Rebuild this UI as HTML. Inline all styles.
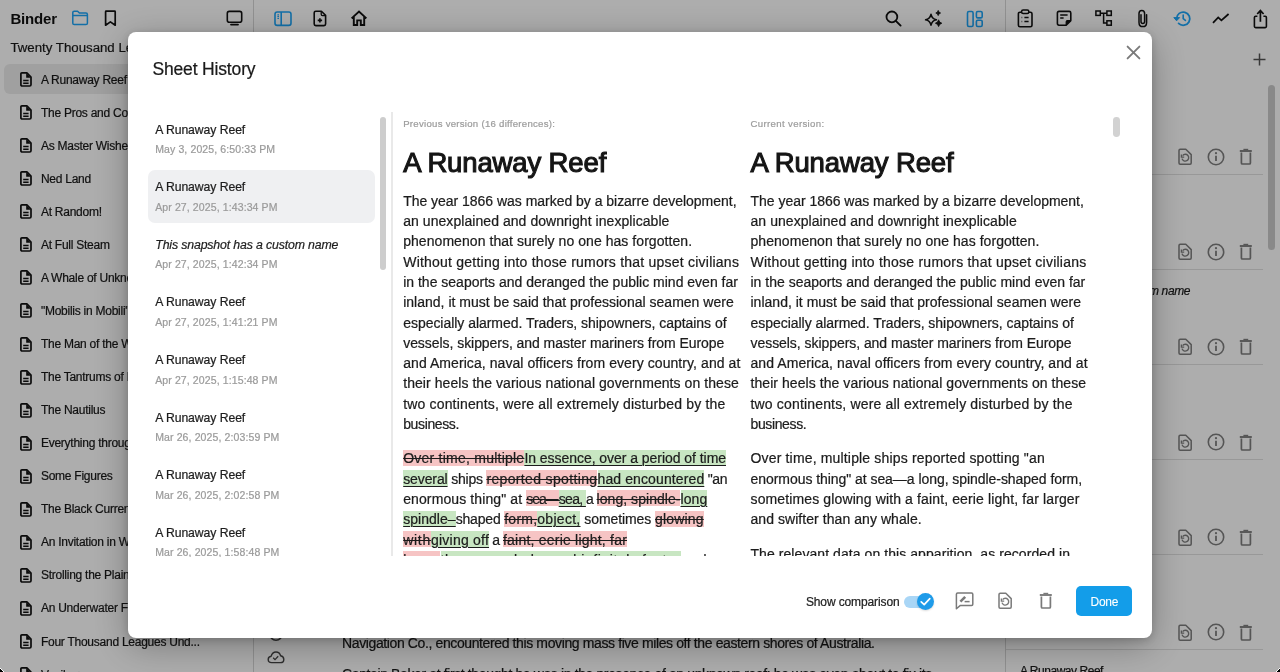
<!DOCTYPE html>
<html><head><meta charset="utf-8">
<style>
*{box-sizing:border-box;margin:0;padding:0}
html,body{width:1280px;height:672px;overflow:hidden}
body{position:relative;background:#fff;will-change:transform;font-family:"Liberation Sans",sans-serif;color:#222}
.a{position:absolute}
.t{white-space:pre;-webkit-text-stroke:0.22px currentColor}
.nb{-webkit-text-stroke:0}
svg.a{overflow:visible}
</style></head><body>

<div class="a" style="left:0.00px;top:0.00px;width:253.00px;height:672.00px;background:#ffffff;"></div>
<div class="a" style="left:253.00px;top:0.00px;width:1.00px;height:672.00px;background:#d6d6d6;"></div>
<div class="a" style="left:1005.00px;top:0.00px;width:1.00px;height:672.00px;background:#d6d6d6;"></div>
<div class="a t " style="left:10.40px;top:11.10px;font-size:15px;line-height:15px;color:#111;letter-spacing:-0.153px;font-weight:bold;-webkit-text-stroke:0;">Binder</div>
<svg class="a" style="left:71px;top:10px;" width="18" height="16" viewBox="0 0 18 16"><path d="M1.8 4.2V2.6Q1.8 1.2 3.2 1.2H6.6L8.4 3H15Q16.4 3 16.4 4.4V13.2Q16.4 14.6 15 14.6H3.2Q1.8 14.6 1.8 13.2Z M1.8 5.6H16.4" fill="none" stroke="#1ca4f7" stroke-width="1.5" stroke-linejoin="round"/></svg>
<svg class="a" style="left:104px;top:10px;" width="13" height="17" viewBox="0 0 13 17"><path d="M1.6 1.8Q1.6 1.2 2.2 1.2H10.6Q11.2 1.2 11.2 1.8V15.2L6.4 11.9L1.6 15.2Z" fill="none" stroke="#111" stroke-width="1.7" stroke-linejoin="round"/></svg>
<svg class="a" style="left:226.3px;top:10.4px;" width="17" height="17" viewBox="0 0 17 17"><rect x="1.3" y="1.4" width="14.4" height="10.8" rx="2" fill="none" stroke="#111" stroke-width="1.6"/><path d="M5 14.6H12" stroke="#111" stroke-width="1.8" stroke-linecap="round"/></svg>
<svg class="a" style="left:274px;top:11px;" width="18" height="15" viewBox="0 0 18 15"><rect x="1" y="1" width="16" height="13.4" rx="2.2" fill="none" stroke="#1ca4f7" stroke-width="1.6"/><path d="M7.2 1V14.4" stroke="#1ca4f7" stroke-width="1.6"/><path d="M3.4 3.9H5M3.4 5.7H5M3.4 7.5H5" stroke="#1ca4f7" stroke-width="1.2"/></svg>
<svg class="a" style="left:313px;top:10px;" width="14" height="17" viewBox="0 0 14 17"><path d="M2.8 1.2H8.4L12.6 5.4V14Q12.6 15.6 11 15.6H2.8Q1.2 15.6 1.2 14V2.8Q1.2 1.2 2.8 1.2Z" fill="none" stroke="#111" stroke-width="1.6" stroke-linejoin="round"/><path d="M8.2 1.4V4.2Q8.2 5.6 9.6 5.6H12.4" fill="none" stroke="#111" stroke-width="1.3"/><path d="M6.9 8.2V12.6M4.7 10.4H9.1" stroke="#111" stroke-width="1.6"/></svg>
<svg class="a" style="left:350px;top:10px;" width="18" height="17" viewBox="0 0 18 17"><path d="M1.6 8.4L9 1.6L16.4 8.4M3.8 6.6V15H7.2V10.4H10.8V15H14.2V6.6" fill="none" stroke="#111" stroke-width="1.9" stroke-linejoin="miter"/></svg>
<svg class="a" style="left:885px;top:10px;" width="17" height="17" viewBox="0 0 17 17"><circle cx="6.9" cy="6.9" r="5.4" fill="none" stroke="#111" stroke-width="1.8"/><path d="M10.8 10.8L15.6 15.6" stroke="#111" stroke-width="1.9" stroke-linecap="round"/></svg>
<svg class="a" style="left:924px;top:9px;" width="20" height="19" viewBox="0 0 20 19"><path d="M7 5.4Q8 10 12.4 10.8Q8 11.6 7 16.2Q6 11.6 1.6 10.8Q6 10 7 5.4Z" fill="none" stroke="#111" stroke-width="1.6" stroke-linejoin="round"/><path d="M14.2 1.4Q14.6 3.6 16.6 4Q14.6 4.4 14.2 6.6Q13.8 4.4 11.8 4Q13.8 3.6 14.2 1.4Z" fill="#111" stroke="#111" stroke-width="0.8"/><path d="M14.6 10.8Q15.2 13.6 17.8 14.2Q15.2 14.8 14.6 17.6Q14 14.8 11.4 14.2Q14 13.6 14.6 10.8Z" fill="#111" stroke="#111" stroke-width="0.8"/></svg>
<svg class="a" style="left:966px;top:10px;" width="18" height="18" viewBox="0 0 18 18"><rect x="1.5" y="1.5" width="5.6" height="15" rx="1.4" fill="none" stroke="#1ca4f7" stroke-width="1.6"/><rect x="10.4" y="1.5" width="5.8" height="6.4" rx="1.4" fill="none" stroke="#1ca4f7" stroke-width="1.6"/><rect x="10.4" y="10.2" width="5.8" height="6.3" rx="1.4" fill="none" stroke="#1ca4f7" stroke-width="1.6"/></svg>
<svg class="a" style="left:1017px;top:9px;" width="17" height="19" viewBox="0 0 17 19"><path d="M4.4 3.2H3Q1.4 3.2 1.4 4.8V16.2Q1.4 17.8 3 17.8H13.4Q15 17.8 15 16.2V4.8Q15 3.2 13.4 3.2H12" fill="none" stroke="#111" stroke-width="1.6"/><rect x="4.6" y="1" width="7.2" height="3.4" rx="1.5" fill="none" stroke="#111" stroke-width="1.5"/><path d="M4.6 8.6H5.2M4.6 12.4H5.2M7.4 8.6H11.6M7.4 12.4H11.6" stroke="#111" stroke-width="1.5"/></svg>
<svg class="a" style="left:1056px;top:10px;" width="17" height="17" viewBox="0 0 17 17"><path d="M3 1.4H13.2Q14.8 1.4 14.8 3V10.6L10.2 15.2H3Q1.4 15.2 1.4 13.6V3Q1.4 1.4 3 1.4Z" fill="none" stroke="#111" stroke-width="1.6" stroke-linejoin="round"/><path d="M14.6 10.6H11.4Q10.2 10.6 10.2 11.8V15" fill="#111" stroke="#111" stroke-width="1.2"/><path d="M4.2 5H11.6M4.2 8H7.6" stroke="#111" stroke-width="1.5"/></svg>
<svg class="a" style="left:1095px;top:10px;" width="18" height="17" viewBox="0 0 18 17"><rect x="0.9" y="1" width="4.4" height="4.4" fill="none" stroke="#111" stroke-width="1.5"/><rect x="11.9" y="1" width="4.4" height="4.4" fill="none" stroke="#111" stroke-width="1.5"/><rect x="11.9" y="10.8" width="4.4" height="4.4" fill="none" stroke="#111" stroke-width="1.5"/><path d="M5.3 3.2H11.9M8.6 3.2V13H11.9" fill="none" stroke="#111" stroke-width="1.5"/></svg>
<svg class="a" style="left:1137px;top:9px;" width="12" height="19" viewBox="0 0 12 19"><path d="M9.6 5.8V13.4Q9.6 17.6 5.8 17.6Q2 17.6 2 13.4V4.6Q2 1.4 4.8 1.4Q7.6 1.4 7.6 4.6V12.6Q7.6 14.6 5.8 14.6Q4 14.6 4 12.6V5.8" fill="none" stroke="#111" stroke-width="1.5" stroke-linecap="round"/></svg>
<svg class="a" style="left:1172.8px;top:9.8px;" width="19" height="17" viewBox="0 0 19 17"><path d="M3.6 8.6A6.6 6.6 0 1 1 5.6 13.4" fill="none" stroke="#1ca4f7" stroke-width="1.8" stroke-linecap="round"/><path d="M0.8 7.6L3.6 10.8L6.6 7.6Z" fill="#1ca4f7" stroke="#1ca4f7" stroke-width="1" stroke-linejoin="round"/><path d="M10.2 5V8.6L12.4 10.4" fill="none" stroke="#1ca4f7" stroke-width="1.6" stroke-linecap="round"/></svg>
<svg class="a" style="left:1212px;top:13px;" width="18" height="11" viewBox="0 0 18 11"><path d="M1 9.8L6.2 4.4L9.4 7.4L16.6 1" fill="none" stroke="#111" stroke-width="1.8" stroke-linejoin="miter"/></svg>
<svg class="a" style="left:1253px;top:9px;" width="15" height="20" viewBox="0 0 15 20"><path d="M4.4 7.2H2.6Q1.4 7.2 1.4 8.4V17.6Q1.4 18.6 2.6 18.6H12.2Q13.4 18.6 13.4 17.6V8.4Q13.4 7.2 12.2 7.2H10.4" fill="none" stroke="#111" stroke-width="1.6"/><path d="M7.4 12.8V1.8M4.2 5L7.4 1.6L10.6 5" fill="none" stroke="#111" stroke-width="1.7" stroke-linejoin="miter"/></svg>
<div class="a t " style="left:10.40px;top:41.18px;font-size:13.25px;line-height:13.25px;color:#1a1a1a;">Twenty Thousand Leagues Under the Sea</div>
<div class="a" style="left:3.70px;top:64.00px;width:246.30px;height:30.00px;background:#ececec;border-radius:6px;"></div>
<svg class="a" style="left:19.5px;top:72.2px;" width="12" height="15" viewBox="0 0 12 15"><path d="M1.9 0.9H6.9L11 5V12.7Q11 14 9.7 14H2.2Q0.9 14 0.9 12.7V1.9Q0.9 0.9 1.9 0.9Z" fill="none" stroke="#111" stroke-width="1.7" stroke-linejoin="round"/><path d="M6.2 1V5.7H10.9Z" fill="#111"/><path d="M3.2 8.5H8.6M3.2 11.2H8.6" stroke="#111" stroke-width="1.5"/></svg>
<div class="a t " style="left:40.90px;top:73.84px;font-size:12px;line-height:12px;color:#1a1a1a;letter-spacing:-0.25px;">A Runaway Reef</div>
<svg class="a" style="left:19.5px;top:105.24000000000001px;" width="12" height="15" viewBox="0 0 12 15"><path d="M1.9 0.9H6.9L11 5V12.7Q11 14 9.7 14H2.2Q0.9 14 0.9 12.7V1.9Q0.9 0.9 1.9 0.9Z" fill="none" stroke="#111" stroke-width="1.7" stroke-linejoin="round"/><path d="M6.2 1V5.7H10.9Z" fill="#111"/><path d="M3.2 8.5H8.6M3.2 11.2H8.6" stroke="#111" stroke-width="1.5"/></svg>
<div class="a t " style="left:40.90px;top:106.88px;font-size:12px;line-height:12px;color:#1a1a1a;letter-spacing:-0.25px;">The Pros and Cons</div>
<svg class="a" style="left:19.5px;top:138.28px;" width="12" height="15" viewBox="0 0 12 15"><path d="M1.9 0.9H6.9L11 5V12.7Q11 14 9.7 14H2.2Q0.9 14 0.9 12.7V1.9Q0.9 0.9 1.9 0.9Z" fill="none" stroke="#111" stroke-width="1.7" stroke-linejoin="round"/><path d="M6.2 1V5.7H10.9Z" fill="#111"/><path d="M3.2 8.5H8.6M3.2 11.2H8.6" stroke="#111" stroke-width="1.5"/></svg>
<div class="a t " style="left:40.90px;top:139.92px;font-size:12px;line-height:12px;color:#1a1a1a;letter-spacing:-0.25px;">As Master Wishes</div>
<svg class="a" style="left:19.5px;top:171.32px;" width="12" height="15" viewBox="0 0 12 15"><path d="M1.9 0.9H6.9L11 5V12.7Q11 14 9.7 14H2.2Q0.9 14 0.9 12.7V1.9Q0.9 0.9 1.9 0.9Z" fill="none" stroke="#111" stroke-width="1.7" stroke-linejoin="round"/><path d="M6.2 1V5.7H10.9Z" fill="#111"/><path d="M3.2 8.5H8.6M3.2 11.2H8.6" stroke="#111" stroke-width="1.5"/></svg>
<div class="a t " style="left:40.90px;top:172.96px;font-size:12px;line-height:12px;color:#1a1a1a;letter-spacing:-0.25px;">Ned Land</div>
<svg class="a" style="left:19.5px;top:204.36px;" width="12" height="15" viewBox="0 0 12 15"><path d="M1.9 0.9H6.9L11 5V12.7Q11 14 9.7 14H2.2Q0.9 14 0.9 12.7V1.9Q0.9 0.9 1.9 0.9Z" fill="none" stroke="#111" stroke-width="1.7" stroke-linejoin="round"/><path d="M6.2 1V5.7H10.9Z" fill="#111"/><path d="M3.2 8.5H8.6M3.2 11.2H8.6" stroke="#111" stroke-width="1.5"/></svg>
<div class="a t " style="left:40.90px;top:206.00px;font-size:12px;line-height:12px;color:#1a1a1a;letter-spacing:-0.25px;">At Random!</div>
<svg class="a" style="left:19.5px;top:237.39999999999998px;" width="12" height="15" viewBox="0 0 12 15"><path d="M1.9 0.9H6.9L11 5V12.7Q11 14 9.7 14H2.2Q0.9 14 0.9 12.7V1.9Q0.9 0.9 1.9 0.9Z" fill="none" stroke="#111" stroke-width="1.7" stroke-linejoin="round"/><path d="M6.2 1V5.7H10.9Z" fill="#111"/><path d="M3.2 8.5H8.6M3.2 11.2H8.6" stroke="#111" stroke-width="1.5"/></svg>
<div class="a t " style="left:40.90px;top:239.04px;font-size:12px;line-height:12px;color:#1a1a1a;letter-spacing:-0.25px;">At Full Steam</div>
<svg class="a" style="left:19.5px;top:270.44px;" width="12" height="15" viewBox="0 0 12 15"><path d="M1.9 0.9H6.9L11 5V12.7Q11 14 9.7 14H2.2Q0.9 14 0.9 12.7V1.9Q0.9 0.9 1.9 0.9Z" fill="none" stroke="#111" stroke-width="1.7" stroke-linejoin="round"/><path d="M6.2 1V5.7H10.9Z" fill="#111"/><path d="M3.2 8.5H8.6M3.2 11.2H8.6" stroke="#111" stroke-width="1.5"/></svg>
<div class="a t " style="left:40.90px;top:272.08px;font-size:12px;line-height:12px;color:#1a1a1a;letter-spacing:-0.25px;">A Whale of Unknown Species</div>
<svg class="a" style="left:19.5px;top:303.48px;" width="12" height="15" viewBox="0 0 12 15"><path d="M1.9 0.9H6.9L11 5V12.7Q11 14 9.7 14H2.2Q0.9 14 0.9 12.7V1.9Q0.9 0.9 1.9 0.9Z" fill="none" stroke="#111" stroke-width="1.7" stroke-linejoin="round"/><path d="M6.2 1V5.7H10.9Z" fill="#111"/><path d="M3.2 8.5H8.6M3.2 11.2H8.6" stroke="#111" stroke-width="1.5"/></svg>
<div class="a t " style="left:40.90px;top:305.12px;font-size:12px;line-height:12px;color:#1a1a1a;letter-spacing:-0.25px;">"Mobilis in Mobili"</div>
<svg class="a" style="left:19.5px;top:336.52px;" width="12" height="15" viewBox="0 0 12 15"><path d="M1.9 0.9H6.9L11 5V12.7Q11 14 9.7 14H2.2Q0.9 14 0.9 12.7V1.9Q0.9 0.9 1.9 0.9Z" fill="none" stroke="#111" stroke-width="1.7" stroke-linejoin="round"/><path d="M6.2 1V5.7H10.9Z" fill="#111"/><path d="M3.2 8.5H8.6M3.2 11.2H8.6" stroke="#111" stroke-width="1.5"/></svg>
<div class="a t " style="left:40.90px;top:338.16px;font-size:12px;line-height:12px;color:#1a1a1a;letter-spacing:-0.25px;">The Man of the Waters</div>
<svg class="a" style="left:19.5px;top:369.56px;" width="12" height="15" viewBox="0 0 12 15"><path d="M1.9 0.9H6.9L11 5V12.7Q11 14 9.7 14H2.2Q0.9 14 0.9 12.7V1.9Q0.9 0.9 1.9 0.9Z" fill="none" stroke="#111" stroke-width="1.7" stroke-linejoin="round"/><path d="M6.2 1V5.7H10.9Z" fill="#111"/><path d="M3.2 8.5H8.6M3.2 11.2H8.6" stroke="#111" stroke-width="1.5"/></svg>
<div class="a t " style="left:40.90px;top:371.20px;font-size:12px;line-height:12px;color:#1a1a1a;letter-spacing:-0.25px;">The Tantrums of Ned Land</div>
<svg class="a" style="left:19.5px;top:402.59999999999997px;" width="12" height="15" viewBox="0 0 12 15"><path d="M1.9 0.9H6.9L11 5V12.7Q11 14 9.7 14H2.2Q0.9 14 0.9 12.7V1.9Q0.9 0.9 1.9 0.9Z" fill="none" stroke="#111" stroke-width="1.7" stroke-linejoin="round"/><path d="M6.2 1V5.7H10.9Z" fill="#111"/><path d="M3.2 8.5H8.6M3.2 11.2H8.6" stroke="#111" stroke-width="1.5"/></svg>
<div class="a t " style="left:40.90px;top:404.24px;font-size:12px;line-height:12px;color:#1a1a1a;letter-spacing:-0.25px;">The Nautilus</div>
<svg class="a" style="left:19.5px;top:435.64px;" width="12" height="15" viewBox="0 0 12 15"><path d="M1.9 0.9H6.9L11 5V12.7Q11 14 9.7 14H2.2Q0.9 14 0.9 12.7V1.9Q0.9 0.9 1.9 0.9Z" fill="none" stroke="#111" stroke-width="1.7" stroke-linejoin="round"/><path d="M6.2 1V5.7H10.9Z" fill="#111"/><path d="M3.2 8.5H8.6M3.2 11.2H8.6" stroke="#111" stroke-width="1.5"/></svg>
<div class="a t " style="left:40.90px;top:437.28px;font-size:12px;line-height:12px;color:#1a1a1a;letter-spacing:-0.25px;">Everything through Electricity</div>
<svg class="a" style="left:19.5px;top:468.68px;" width="12" height="15" viewBox="0 0 12 15"><path d="M1.9 0.9H6.9L11 5V12.7Q11 14 9.7 14H2.2Q0.9 14 0.9 12.7V1.9Q0.9 0.9 1.9 0.9Z" fill="none" stroke="#111" stroke-width="1.7" stroke-linejoin="round"/><path d="M6.2 1V5.7H10.9Z" fill="#111"/><path d="M3.2 8.5H8.6M3.2 11.2H8.6" stroke="#111" stroke-width="1.5"/></svg>
<div class="a t " style="left:40.90px;top:470.32px;font-size:12px;line-height:12px;color:#1a1a1a;letter-spacing:-0.25px;">Some Figures</div>
<svg class="a" style="left:19.5px;top:501.71999999999997px;" width="12" height="15" viewBox="0 0 12 15"><path d="M1.9 0.9H6.9L11 5V12.7Q11 14 9.7 14H2.2Q0.9 14 0.9 12.7V1.9Q0.9 0.9 1.9 0.9Z" fill="none" stroke="#111" stroke-width="1.7" stroke-linejoin="round"/><path d="M6.2 1V5.7H10.9Z" fill="#111"/><path d="M3.2 8.5H8.6M3.2 11.2H8.6" stroke="#111" stroke-width="1.5"/></svg>
<div class="a t " style="left:40.90px;top:503.36px;font-size:12px;line-height:12px;color:#1a1a1a;letter-spacing:-0.25px;">The Black Current</div>
<svg class="a" style="left:19.5px;top:534.76px;" width="12" height="15" viewBox="0 0 12 15"><path d="M1.9 0.9H6.9L11 5V12.7Q11 14 9.7 14H2.2Q0.9 14 0.9 12.7V1.9Q0.9 0.9 1.9 0.9Z" fill="none" stroke="#111" stroke-width="1.7" stroke-linejoin="round"/><path d="M6.2 1V5.7H10.9Z" fill="#111"/><path d="M3.2 8.5H8.6M3.2 11.2H8.6" stroke="#111" stroke-width="1.5"/></svg>
<div class="a t " style="left:40.90px;top:536.40px;font-size:12px;line-height:12px;color:#1a1a1a;letter-spacing:-0.25px;">An Invitation in Writing</div>
<svg class="a" style="left:19.5px;top:567.8px;" width="12" height="15" viewBox="0 0 12 15"><path d="M1.9 0.9H6.9L11 5V12.7Q11 14 9.7 14H2.2Q0.9 14 0.9 12.7V1.9Q0.9 0.9 1.9 0.9Z" fill="none" stroke="#111" stroke-width="1.7" stroke-linejoin="round"/><path d="M6.2 1V5.7H10.9Z" fill="#111"/><path d="M3.2 8.5H8.6M3.2 11.2H8.6" stroke="#111" stroke-width="1.5"/></svg>
<div class="a t " style="left:40.90px;top:569.44px;font-size:12px;line-height:12px;color:#1a1a1a;letter-spacing:-0.25px;">Strolling the Plains</div>
<svg class="a" style="left:19.5px;top:600.84px;" width="12" height="15" viewBox="0 0 12 15"><path d="M1.9 0.9H6.9L11 5V12.7Q11 14 9.7 14H2.2Q0.9 14 0.9 12.7V1.9Q0.9 0.9 1.9 0.9Z" fill="none" stroke="#111" stroke-width="1.7" stroke-linejoin="round"/><path d="M6.2 1V5.7H10.9Z" fill="#111"/><path d="M3.2 8.5H8.6M3.2 11.2H8.6" stroke="#111" stroke-width="1.5"/></svg>
<div class="a t " style="left:40.90px;top:602.48px;font-size:12px;line-height:12px;color:#1a1a1a;letter-spacing:-0.25px;">An Underwater Forest</div>
<svg class="a" style="left:19.5px;top:633.88px;" width="12" height="15" viewBox="0 0 12 15"><path d="M1.9 0.9H6.9L11 5V12.7Q11 14 9.7 14H2.2Q0.9 14 0.9 12.7V1.9Q0.9 0.9 1.9 0.9Z" fill="none" stroke="#111" stroke-width="1.7" stroke-linejoin="round"/><path d="M6.2 1V5.7H10.9Z" fill="#111"/><path d="M3.2 8.5H8.6M3.2 11.2H8.6" stroke="#111" stroke-width="1.5"/></svg>
<div class="a t " style="left:40.90px;top:635.52px;font-size:12px;line-height:12px;color:#1a1a1a;letter-spacing:-0.25px;">Four Thousand Leagues Und...</div>
<svg class="a" style="left:19.5px;top:666.9200000000001px;" width="12" height="15" viewBox="0 0 12 15"><path d="M1.9 0.9H6.9L11 5V12.7Q11 14 9.7 14H2.2Q0.9 14 0.9 12.7V1.9Q0.9 0.9 1.9 0.9Z" fill="none" stroke="#111" stroke-width="1.7" stroke-linejoin="round"/><path d="M6.2 1V5.7H10.9Z" fill="#111"/><path d="M3.2 8.5H8.6M3.2 11.2H8.6" stroke="#111" stroke-width="1.5"/></svg>
<div class="a t " style="left:40.90px;top:668.56px;font-size:12px;line-height:12px;color:#1a1a1a;letter-spacing:-0.25px;">Vanikoro</div>
<svg class="a" style="left:268px;top:626px;" width="17" height="17" viewBox="0 0 17 17"><circle cx="8" cy="8" r="6.2" fill="none" stroke="#444" stroke-width="1.5"/></svg>
<svg class="a" style="left:267px;top:651px;" width="18" height="13" viewBox="0 0 18 13"><path d="M4.6 11.6Q1.2 11.6 1.2 8.4Q1.2 5.6 4.2 5.2Q5.2 1 9 1Q12.6 1 13.6 4.8Q16.8 5.4 16.8 8.4Q16.8 11.6 13.4 11.6Z" fill="none" stroke="#444" stroke-width="1.4" stroke-linejoin="round"/><path d="M6.2 6.8L8 8.6L11.2 5.2" fill="none" stroke="#444" stroke-width="1.3"/></svg>
<div class="a t " style="left:342.00px;top:636.15px;font-size:14px;line-height:14px;color:#1a1a1a;letter-spacing:-0.383px;">Navigation Co., encountered this moving mass five miles off the eastern shores of Australia.</div>
<div class="a t " style="left:342.00px;top:666.65px;font-size:14px;line-height:14px;color:#1a1a1a;letter-spacing:-0.381px;">Captain Baker at first thought he was in the presence of an unknown reef; he was even about to fix its</div>
<svg class="a" style="left:1253px;top:53px;" width="13" height="13" viewBox="0 0 13 13"><path d="M6.5 0.5V12.5M0.5 6.5H12.5" stroke="#555" stroke-width="1.5"/></svg>
<div class="a" style="left:1268.00px;top:84.70px;width:6.60px;height:165.30px;background:#cbcbcb;border-radius:4px;"></div>
<svg class="a" style="left:1177.5px;top:148.20000000000002px;" width="14" height="17" viewBox="0 0 14 17"><path d="M2.2 1.2H7.8L13.2 6.6V15Q13.2 16.2 12 16.2H2.2Q1 16.2 1 15V2.4Q1 1.2 2.2 1.2Z" fill="none" stroke="#7e7e7e" stroke-width="1.5" stroke-linejoin="round"/><path d="M4.6 7.6A3.4 3.4 0 1 1 4 10.6" fill="none" stroke="#7e7e7e" stroke-width="1.4"/><path d="M3.4 6.4V9.2H6.2" fill="none" stroke="#7e7e7e" stroke-width="1.3"/></svg>
<svg class="a" style="left:1206.5px;top:147.70000000000002px;" width="18" height="18" viewBox="0 0 18 18"><circle cx="9" cy="9" r="7.7" fill="none" stroke="#7e7e7e" stroke-width="1.6"/><path d="M9 7.8V13" stroke="#7e7e7e" stroke-width="1.8"/><circle cx="9" cy="5.2" r="1.1" fill="#7e7e7e"/></svg>
<svg class="a" style="left:1239px;top:148.20000000000002px;" width="14" height="17" viewBox="0 0 14 17"><path d="M0.8 3H12.8" fill="none" stroke="#7e7e7e" stroke-width="1.9"/><path d="M4.4 1.5H9.2" fill="none" stroke="#7e7e7e" stroke-width="1.4"/><path d="M2.4 4.4V15Q2.4 16 3.4 16H10.4Q11.4 16 11.4 15V4.4" fill="none" stroke="#7e7e7e" stroke-width="1.7"/></svg>
<div class="a" style="left:1006.00px;top:173.80px;width:257.00px;height:1.00px;background:#e0e0e0;"></div>
<svg class="a" style="left:1177.5px;top:243.3px;" width="14" height="17" viewBox="0 0 14 17"><path d="M2.2 1.2H7.8L13.2 6.6V15Q13.2 16.2 12 16.2H2.2Q1 16.2 1 15V2.4Q1 1.2 2.2 1.2Z" fill="none" stroke="#7e7e7e" stroke-width="1.5" stroke-linejoin="round"/><path d="M4.6 7.6A3.4 3.4 0 1 1 4 10.6" fill="none" stroke="#7e7e7e" stroke-width="1.4"/><path d="M3.4 6.4V9.2H6.2" fill="none" stroke="#7e7e7e" stroke-width="1.3"/></svg>
<svg class="a" style="left:1206.5px;top:242.8px;" width="18" height="18" viewBox="0 0 18 18"><circle cx="9" cy="9" r="7.7" fill="none" stroke="#7e7e7e" stroke-width="1.6"/><path d="M9 7.8V13" stroke="#7e7e7e" stroke-width="1.8"/><circle cx="9" cy="5.2" r="1.1" fill="#7e7e7e"/></svg>
<svg class="a" style="left:1239px;top:243.3px;" width="14" height="17" viewBox="0 0 14 17"><path d="M0.8 3H12.8" fill="none" stroke="#7e7e7e" stroke-width="1.9"/><path d="M4.4 1.5H9.2" fill="none" stroke="#7e7e7e" stroke-width="1.4"/><path d="M2.4 4.4V15Q2.4 16 3.4 16H10.4Q11.4 16 11.4 15V4.4" fill="none" stroke="#7e7e7e" stroke-width="1.7"/></svg>
<div class="a" style="left:1006.00px;top:268.90px;width:257.00px;height:1.00px;background:#e0e0e0;"></div>
<svg class="a" style="left:1177.5px;top:338.4px;" width="14" height="17" viewBox="0 0 14 17"><path d="M2.2 1.2H7.8L13.2 6.6V15Q13.2 16.2 12 16.2H2.2Q1 16.2 1 15V2.4Q1 1.2 2.2 1.2Z" fill="none" stroke="#7e7e7e" stroke-width="1.5" stroke-linejoin="round"/><path d="M4.6 7.6A3.4 3.4 0 1 1 4 10.6" fill="none" stroke="#7e7e7e" stroke-width="1.4"/><path d="M3.4 6.4V9.2H6.2" fill="none" stroke="#7e7e7e" stroke-width="1.3"/></svg>
<svg class="a" style="left:1206.5px;top:337.9px;" width="18" height="18" viewBox="0 0 18 18"><circle cx="9" cy="9" r="7.7" fill="none" stroke="#7e7e7e" stroke-width="1.6"/><path d="M9 7.8V13" stroke="#7e7e7e" stroke-width="1.8"/><circle cx="9" cy="5.2" r="1.1" fill="#7e7e7e"/></svg>
<svg class="a" style="left:1239px;top:338.4px;" width="14" height="17" viewBox="0 0 14 17"><path d="M0.8 3H12.8" fill="none" stroke="#7e7e7e" stroke-width="1.9"/><path d="M4.4 1.5H9.2" fill="none" stroke="#7e7e7e" stroke-width="1.4"/><path d="M2.4 4.4V15Q2.4 16 3.4 16H10.4Q11.4 16 11.4 15V4.4" fill="none" stroke="#7e7e7e" stroke-width="1.7"/></svg>
<div class="a" style="left:1006.00px;top:364.00px;width:257.00px;height:1.00px;background:#e0e0e0;"></div>
<svg class="a" style="left:1177.5px;top:433.49999999999994px;" width="14" height="17" viewBox="0 0 14 17"><path d="M2.2 1.2H7.8L13.2 6.6V15Q13.2 16.2 12 16.2H2.2Q1 16.2 1 15V2.4Q1 1.2 2.2 1.2Z" fill="none" stroke="#7e7e7e" stroke-width="1.5" stroke-linejoin="round"/><path d="M4.6 7.6A3.4 3.4 0 1 1 4 10.6" fill="none" stroke="#7e7e7e" stroke-width="1.4"/><path d="M3.4 6.4V9.2H6.2" fill="none" stroke="#7e7e7e" stroke-width="1.3"/></svg>
<svg class="a" style="left:1206.5px;top:432.99999999999994px;" width="18" height="18" viewBox="0 0 18 18"><circle cx="9" cy="9" r="7.7" fill="none" stroke="#7e7e7e" stroke-width="1.6"/><path d="M9 7.8V13" stroke="#7e7e7e" stroke-width="1.8"/><circle cx="9" cy="5.2" r="1.1" fill="#7e7e7e"/></svg>
<svg class="a" style="left:1239px;top:433.49999999999994px;" width="14" height="17" viewBox="0 0 14 17"><path d="M0.8 3H12.8" fill="none" stroke="#7e7e7e" stroke-width="1.9"/><path d="M4.4 1.5H9.2" fill="none" stroke="#7e7e7e" stroke-width="1.4"/><path d="M2.4 4.4V15Q2.4 16 3.4 16H10.4Q11.4 16 11.4 15V4.4" fill="none" stroke="#7e7e7e" stroke-width="1.7"/></svg>
<div class="a" style="left:1006.00px;top:459.10px;width:257.00px;height:1.00px;background:#e0e0e0;"></div>
<svg class="a" style="left:1177.5px;top:528.6px;" width="14" height="17" viewBox="0 0 14 17"><path d="M2.2 1.2H7.8L13.2 6.6V15Q13.2 16.2 12 16.2H2.2Q1 16.2 1 15V2.4Q1 1.2 2.2 1.2Z" fill="none" stroke="#7e7e7e" stroke-width="1.5" stroke-linejoin="round"/><path d="M4.6 7.6A3.4 3.4 0 1 1 4 10.6" fill="none" stroke="#7e7e7e" stroke-width="1.4"/><path d="M3.4 6.4V9.2H6.2" fill="none" stroke="#7e7e7e" stroke-width="1.3"/></svg>
<svg class="a" style="left:1206.5px;top:528.1px;" width="18" height="18" viewBox="0 0 18 18"><circle cx="9" cy="9" r="7.7" fill="none" stroke="#7e7e7e" stroke-width="1.6"/><path d="M9 7.8V13" stroke="#7e7e7e" stroke-width="1.8"/><circle cx="9" cy="5.2" r="1.1" fill="#7e7e7e"/></svg>
<svg class="a" style="left:1239px;top:528.6px;" width="14" height="17" viewBox="0 0 14 17"><path d="M0.8 3H12.8" fill="none" stroke="#7e7e7e" stroke-width="1.9"/><path d="M4.4 1.5H9.2" fill="none" stroke="#7e7e7e" stroke-width="1.4"/><path d="M2.4 4.4V15Q2.4 16 3.4 16H10.4Q11.4 16 11.4 15V4.4" fill="none" stroke="#7e7e7e" stroke-width="1.7"/></svg>
<div class="a" style="left:1006.00px;top:554.20px;width:257.00px;height:1.00px;background:#e0e0e0;"></div>
<svg class="a" style="left:1177.5px;top:623.6999999999999px;" width="14" height="17" viewBox="0 0 14 17"><path d="M2.2 1.2H7.8L13.2 6.6V15Q13.2 16.2 12 16.2H2.2Q1 16.2 1 15V2.4Q1 1.2 2.2 1.2Z" fill="none" stroke="#7e7e7e" stroke-width="1.5" stroke-linejoin="round"/><path d="M4.6 7.6A3.4 3.4 0 1 1 4 10.6" fill="none" stroke="#7e7e7e" stroke-width="1.4"/><path d="M3.4 6.4V9.2H6.2" fill="none" stroke="#7e7e7e" stroke-width="1.3"/></svg>
<svg class="a" style="left:1206.5px;top:623.1999999999999px;" width="18" height="18" viewBox="0 0 18 18"><circle cx="9" cy="9" r="7.7" fill="none" stroke="#7e7e7e" stroke-width="1.6"/><path d="M9 7.8V13" stroke="#7e7e7e" stroke-width="1.8"/><circle cx="9" cy="5.2" r="1.1" fill="#7e7e7e"/></svg>
<svg class="a" style="left:1239px;top:623.6999999999999px;" width="14" height="17" viewBox="0 0 14 17"><path d="M0.8 3H12.8" fill="none" stroke="#7e7e7e" stroke-width="1.9"/><path d="M4.4 1.5H9.2" fill="none" stroke="#7e7e7e" stroke-width="1.4"/><path d="M2.4 4.4V15Q2.4 16 3.4 16H10.4Q11.4 16 11.4 15V4.4" fill="none" stroke="#7e7e7e" stroke-width="1.7"/></svg>
<div class="a" style="left:1006.00px;top:649.30px;width:257.00px;height:1.00px;background:#e0e0e0;"></div>
<div class="a t " style="left:1020.00px;top:94.54px;font-size:12px;line-height:12px;color:#1a1a1a;letter-spacing:-0.456px;">A Runaway Reef</div>
<div class="a t " style="left:1020.00px;top:189.64px;font-size:12px;line-height:12px;color:#1a1a1a;letter-spacing:-0.456px;">A Runaway Reef</div>
<div class="a t " style="left:1020.00px;top:284.74px;font-size:12px;line-height:12px;color:#1a1a1a;letter-spacing:-0.412px;font-style:italic;">This snapshot has a custom name</div>
<div class="a t " style="left:1020.00px;top:379.84px;font-size:12px;line-height:12px;color:#1a1a1a;letter-spacing:-0.456px;">A Runaway Reef</div>
<div class="a t " style="left:1020.00px;top:474.94px;font-size:12px;line-height:12px;color:#1a1a1a;letter-spacing:-0.456px;">A Runaway Reef</div>
<div class="a t " style="left:1020.00px;top:570.04px;font-size:12px;line-height:12px;color:#1a1a1a;letter-spacing:-0.456px;">A Runaway Reef</div>
<div class="a t " style="left:1020.00px;top:665.14px;font-size:12px;line-height:12px;color:#1a1a1a;letter-spacing:-0.456px;">A Runaway Reef</div>
<div class="a" style="left:0.00px;top:0.00px;width:1280.00px;height:672.00px;background:rgba(0,0,0,0.32);"></div>
<div class="a" style="left:128px;top:32px;width:1024px;height:606px;background:#fff;border-radius:8px;box-shadow:0 8px 36px rgba(0,0,0,0.3),0 2px 8px rgba(0,0,0,0.18)"></div>
<div class="a t " style="left:152.40px;top:61.49px;font-size:17.5px;line-height:17.5px;color:#1a1a1a;letter-spacing:-0.157px;">Sheet History</div>
<svg class="a" style="left:1127px;top:46px;" width="13" height="13" viewBox="0 0 13 13"><path d="M0.6 0.6L12.4 12.4M12.4 0.6L0.6 12.4" stroke="#7a7a7a" stroke-width="1.9" stroke-linecap="round"/></svg>
<div class="a" style="left:128px;top:112px;width:262px;height:445px;overflow:hidden">
<div class="a t " style="left:27.20px;top:11.67px;font-size:12.2px;line-height:12.2px;color:#1e1e1e;letter-spacing:-0.056px;">A Runaway Reef</div>
<div class="a t " style="left:27.20px;top:32.11px;font-size:10.5px;line-height:10.5px;color:#9b9b9b;letter-spacing:0.117px;">May 3, 2025, 6:50:33 PM</div>
<div class="a" style="left:20.10px;top:58.00px;width:226.60px;height:53.40px;background:#eff0f2;border-radius:7px;"></div>
<div class="a t " style="left:27.20px;top:69.27px;font-size:12.2px;line-height:12.2px;color:#1e1e1e;letter-spacing:-0.056px;">A Runaway Reef</div>
<div class="a t " style="left:27.20px;top:89.71px;font-size:10.5px;line-height:10.5px;color:#9b9b9b;letter-spacing:0.114px;">Apr 27, 2025, 1:43:34 PM</div>
<div class="a t " style="left:27.30px;top:126.79px;font-size:12.3px;line-height:12.3px;color:#1e1e1e;letter-spacing:-0.139px;font-style:italic;">This snapshot has a custom name</div>
<div class="a t " style="left:27.20px;top:147.31px;font-size:10.5px;line-height:10.5px;color:#9b9b9b;letter-spacing:0.114px;">Apr 27, 2025, 1:42:34 PM</div>
<div class="a t " style="left:27.20px;top:184.47px;font-size:12.2px;line-height:12.2px;color:#1e1e1e;letter-spacing:-0.056px;">A Runaway Reef</div>
<div class="a t " style="left:27.20px;top:204.91px;font-size:10.5px;line-height:10.5px;color:#9b9b9b;letter-spacing:0.114px;">Apr 27, 2025, 1:41:21 PM</div>
<div class="a t " style="left:27.20px;top:242.07px;font-size:12.2px;line-height:12.2px;color:#1e1e1e;letter-spacing:-0.056px;">A Runaway Reef</div>
<div class="a t " style="left:27.20px;top:262.51px;font-size:10.5px;line-height:10.5px;color:#9b9b9b;letter-spacing:0.114px;">Apr 27, 2025, 1:15:48 PM</div>
<div class="a t " style="left:27.20px;top:299.67px;font-size:12.2px;line-height:12.2px;color:#1e1e1e;letter-spacing:-0.056px;">A Runaway Reef</div>
<div class="a t " style="left:27.20px;top:320.11px;font-size:10.5px;line-height:10.5px;color:#9b9b9b;letter-spacing:0.116px;">Mar 26, 2025, 2:03:59 PM</div>
<div class="a t " style="left:27.20px;top:357.27px;font-size:12.2px;line-height:12.2px;color:#1e1e1e;letter-spacing:-0.056px;">A Runaway Reef</div>
<div class="a t " style="left:27.20px;top:377.71px;font-size:10.5px;line-height:10.5px;color:#9b9b9b;letter-spacing:0.116px;">Mar 26, 2025, 2:02:58 PM</div>
<div class="a t " style="left:27.20px;top:414.87px;font-size:12.2px;line-height:12.2px;color:#1e1e1e;letter-spacing:-0.056px;">A Runaway Reef</div>
<div class="a t " style="left:27.20px;top:435.31px;font-size:10.5px;line-height:10.5px;color:#9b9b9b;letter-spacing:0.116px;">Mar 26, 2025, 1:58:48 PM</div>
</div>
<div class="a" style="left:379.80px;top:116.80px;width:6.40px;height:153.10px;background:#cdcdcd;border-radius:3.2px;"></div>
<div class="a" style="left:391.20px;top:111.90px;width:1.40px;height:443.80px;background:#e9e9e9;"></div>
<div class="a t " style="left:403.20px;top:119.37px;font-size:9.6px;line-height:9.6px;color:#9d9d9d;letter-spacing:0.273px;">Previous version (16 differences):</div>
<div class="a t " style="left:750.50px;top:119.37px;font-size:9.6px;line-height:9.6px;color:#9d9d9d;letter-spacing:0.359px;">Current version:</div>
<div class="a t " style="left:403.20px;top:148.92px;font-size:27.5px;line-height:27.5px;color:#151515;letter-spacing:-0.132px;-webkit-text-stroke:1.1px #151515;">A Runaway Reef</div>
<div class="a t " style="left:750.50px;top:148.92px;font-size:27.5px;line-height:27.5px;color:#151515;letter-spacing:-0.132px;-webkit-text-stroke:1.1px #151515;">A Runaway Reef</div>
<div class="a t " style="left:403.20px;top:193.75px;font-size:14px;line-height:14px;color:#1c1c1c;letter-spacing:-0.026px;">The year 1866 was marked by a bizarre development,</div>
<div class="a t " style="left:750.50px;top:193.75px;font-size:14px;line-height:14px;color:#1c1c1c;letter-spacing:-0.026px;">The year 1866 was marked by a bizarre development,</div>
<div class="a t " style="left:403.20px;top:214.05px;font-size:14px;line-height:14px;color:#1c1c1c;letter-spacing:0.059px;">an unexplained and downright inexplicable</div>
<div class="a t " style="left:750.50px;top:214.05px;font-size:14px;line-height:14px;color:#1c1c1c;letter-spacing:0.059px;">an unexplained and downright inexplicable</div>
<div class="a t " style="left:403.20px;top:234.35px;font-size:14px;line-height:14px;color:#1c1c1c;letter-spacing:0.056px;">phenomenon that surely no one has forgotten.</div>
<div class="a t " style="left:750.50px;top:234.35px;font-size:14px;line-height:14px;color:#1c1c1c;letter-spacing:0.056px;">phenomenon that surely no one has forgotten.</div>
<div class="a t " style="left:403.20px;top:254.65px;font-size:14px;line-height:14px;color:#1c1c1c;letter-spacing:0.226px;">Without getting into those rumors that upset civilians</div>
<div class="a t " style="left:750.50px;top:254.65px;font-size:14px;line-height:14px;color:#1c1c1c;letter-spacing:0.226px;">Without getting into those rumors that upset civilians</div>
<div class="a t " style="left:403.20px;top:274.95px;font-size:14px;line-height:14px;color:#1c1c1c;letter-spacing:0.001px;">in the seaports and deranged the public mind even far</div>
<div class="a t " style="left:750.50px;top:274.95px;font-size:14px;line-height:14px;color:#1c1c1c;letter-spacing:0.001px;">in the seaports and deranged the public mind even far</div>
<div class="a t " style="left:403.20px;top:295.25px;font-size:14px;line-height:14px;color:#1c1c1c;letter-spacing:0.010px;">inland, it must be said that professional seamen were</div>
<div class="a t " style="left:750.50px;top:295.25px;font-size:14px;line-height:14px;color:#1c1c1c;letter-spacing:0.010px;">inland, it must be said that professional seamen were</div>
<div class="a t " style="left:403.20px;top:315.55px;font-size:14px;line-height:14px;color:#1c1c1c;letter-spacing:-0.038px;">especially alarmed. Traders, shipowners, captains of</div>
<div class="a t " style="left:750.50px;top:315.55px;font-size:14px;line-height:14px;color:#1c1c1c;letter-spacing:-0.038px;">especially alarmed. Traders, shipowners, captains of</div>
<div class="a t " style="left:403.20px;top:335.85px;font-size:14px;line-height:14px;color:#1c1c1c;letter-spacing:-0.052px;">vessels, skippers, and master mariners from Europe</div>
<div class="a t " style="left:750.50px;top:335.85px;font-size:14px;line-height:14px;color:#1c1c1c;letter-spacing:-0.052px;">vessels, skippers, and master mariners from Europe</div>
<div class="a t " style="left:403.20px;top:356.15px;font-size:14px;line-height:14px;color:#1c1c1c;letter-spacing:0.072px;">and America, naval officers from every country, and at</div>
<div class="a t " style="left:750.50px;top:356.15px;font-size:14px;line-height:14px;color:#1c1c1c;letter-spacing:0.072px;">and America, naval officers from every country, and at</div>
<div class="a t " style="left:403.20px;top:376.45px;font-size:14px;line-height:14px;color:#1c1c1c;letter-spacing:0.062px;">their heels the various national governments on these</div>
<div class="a t " style="left:750.50px;top:376.45px;font-size:14px;line-height:14px;color:#1c1c1c;letter-spacing:0.062px;">their heels the various national governments on these</div>
<div class="a t " style="left:403.20px;top:396.75px;font-size:14px;line-height:14px;color:#1c1c1c;letter-spacing:0.168px;">two continents, were all extremely disturbed by the</div>
<div class="a t " style="left:750.50px;top:396.75px;font-size:14px;line-height:14px;color:#1c1c1c;letter-spacing:0.168px;">two continents, were all extremely disturbed by the</div>
<div class="a t " style="left:403.20px;top:417.05px;font-size:14px;line-height:14px;color:#1c1c1c;letter-spacing:-0.373px;">business.</div>
<div class="a t " style="left:750.50px;top:417.05px;font-size:14px;line-height:14px;color:#1c1c1c;letter-spacing:-0.373px;">business.</div>
<div class="a" style="left:393px;top:112px;width:759px;height:444px;overflow:hidden">
<div class="a" style="left:10.20px;top:337.70px;width:121.20px;height:16.10px;background:#f6c4c4;"></div>
<div class="a" style="left:131.40px;top:337.70px;width:201.60px;height:16.10px;background:#c8e6c2;"></div>
<div class="a t " style="left:10.20px;top:339.35px;font-size:14px;line-height:14px;color:#1c1c1c;letter-spacing:0.237px;text-decoration:line-through;text-decoration-thickness:1.3px;">Over time, multiple</div>
<div class="a t " style="left:131.40px;top:339.35px;font-size:14px;line-height:14px;color:#1c1c1c;letter-spacing:-0.046px;text-decoration:underline;text-decoration-thickness:1.3px;text-underline-offset:2px;">In essence, over a period of time</div>
<div class="a" style="left:10.20px;top:358.00px;width:44.40px;height:16.10px;background:#c8e6c2;"></div>
<div class="a" style="left:93.40px;top:358.00px;width:111.10px;height:16.10px;background:#f6c4c4;"></div>
<div class="a" style="left:204.50px;top:358.00px;width:106.80px;height:16.10px;background:#c8e6c2;"></div>
<div class="a t " style="left:10.20px;top:359.65px;font-size:14px;line-height:14px;color:#1c1c1c;letter-spacing:-0.106px;text-decoration:underline;text-decoration-thickness:1.3px;text-underline-offset:2px;">several</div>
<div class="a t " style="left:54.60px;top:359.65px;font-size:14px;line-height:14px;color:#1c1c1c;letter-spacing:-0.238px;"> ships </div>
<div class="a t " style="left:93.40px;top:359.65px;font-size:14px;line-height:14px;color:#1c1c1c;letter-spacing:0.354px;text-decoration:line-through;text-decoration-thickness:1.3px;">reported spotting</div>
<div class="a t " style="left:204.50px;top:359.65px;font-size:14px;line-height:14px;color:#1c1c1c;letter-spacing:0.114px;text-decoration:underline;text-decoration-thickness:1.3px;text-underline-offset:2px;">had encountered</div>
<div class="a t " style="left:311.30px;top:359.65px;font-size:14px;line-height:14px;color:#1c1c1c;letter-spacing:-0.434px;"> "an</div>
<div class="a" style="left:133.20px;top:378.30px;width:32.50px;height:16.10px;background:#f6c4c4;"></div>
<div class="a" style="left:165.70px;top:378.30px;width:27.20px;height:16.10px;background:#c8e6c2;"></div>
<div class="a" style="left:203.60px;top:378.30px;width:83.90px;height:16.10px;background:#f6c4c4;"></div>
<div class="a" style="left:287.50px;top:378.30px;width:26.80px;height:16.10px;background:#c8e6c2;"></div>
<div class="a t " style="left:10.20px;top:379.95px;font-size:14px;line-height:14px;color:#1c1c1c;letter-spacing:0.109px;">enormous thing" at </div>
<div class="a t " style="left:133.20px;top:379.95px;font-size:14px;line-height:14px;color:#1c1c1c;letter-spacing:-1.020px;text-decoration:line-through;text-decoration-thickness:1.3px;">sea—</div>
<div class="a t " style="left:165.70px;top:379.95px;font-size:14px;line-height:14px;color:#1c1c1c;letter-spacing:-0.632px;text-decoration:underline;text-decoration-thickness:1.3px;text-underline-offset:2px;">sea, </div>
<div class="a t " style="left:192.90px;top:379.95px;font-size:14px;line-height:14px;color:#1c1c1c;letter-spacing:-0.494px;">a </div>
<div class="a t " style="left:203.60px;top:379.95px;font-size:14px;line-height:14px;color:#1c1c1c;letter-spacing:0.044px;text-decoration:line-through;text-decoration-thickness:1.3px;">long, spindle-</div>
<div class="a t " style="left:287.50px;top:379.95px;font-size:14px;line-height:14px;color:#1c1c1c;letter-spacing:0.083px;text-decoration:underline;text-decoration-thickness:1.3px;text-underline-offset:2px;">long</div>
<div class="a" style="left:10.20px;top:398.60px;width:52.50px;height:16.10px;background:#c8e6c2;"></div>
<div class="a" style="left:111.25px;top:398.60px;width:33.05px;height:16.10px;background:#f6c4c4;"></div>
<div class="a" style="left:144.30px;top:398.60px;width:43.20px;height:16.10px;background:#c8e6c2;"></div>
<div class="a" style="left:262.00px;top:398.60px;width:48.75px;height:16.10px;background:#f6c4c4;"></div>
<div class="a t " style="left:10.20px;top:400.25px;font-size:14px;line-height:14px;color:#1c1c1c;letter-spacing:0.043px;text-decoration:underline;text-decoration-thickness:1.3px;text-underline-offset:2px;">spindle–</div>
<div class="a t " style="left:62.70px;top:400.25px;font-size:14px;line-height:14px;color:#1c1c1c;letter-spacing:-0.183px;">shaped </div>
<div class="a t " style="left:111.25px;top:400.25px;font-size:14px;line-height:14px;color:#1c1c1c;letter-spacing:0.232px;text-decoration:line-through;text-decoration-thickness:1.3px;">form,</div>
<div class="a t " style="left:144.30px;top:400.25px;font-size:14px;line-height:14px;color:#1c1c1c;letter-spacing:0.279px;text-decoration:underline;text-decoration-thickness:1.3px;text-underline-offset:2px;">object,</div>
<div class="a t " style="left:187.50px;top:400.25px;font-size:14px;line-height:14px;color:#1c1c1c;letter-spacing:-0.088px;"> sometimes </div>
<div class="a t " style="left:262.00px;top:400.25px;font-size:14px;line-height:14px;color:#1c1c1c;letter-spacing:0.181px;text-decoration:line-through;text-decoration-thickness:1.3px;">glowing</div>
<div class="a" style="left:10.20px;top:418.90px;width:27.80px;height:16.10px;background:#f6c4c4;"></div>
<div class="a" style="left:38.00px;top:418.90px;width:58.00px;height:16.10px;background:#c8e6c2;"></div>
<div class="a" style="left:110.00px;top:418.90px;width:124.00px;height:16.10px;background:#f6c4c4;"></div>
<div class="a t " style="left:10.20px;top:420.55px;font-size:14px;line-height:14px;color:#1c1c1c;letter-spacing:0.723px;text-decoration:line-through;text-decoration-thickness:1.3px;">with</div>
<div class="a t " style="left:38.00px;top:420.55px;font-size:14px;line-height:14px;color:#1c1c1c;letter-spacing:0.222px;text-decoration:underline;text-decoration-thickness:1.3px;text-underline-offset:2px;">giving off</div>
<div class="a t " style="left:96.00px;top:420.55px;font-size:14px;line-height:14px;color:#1c1c1c;letter-spacing:-0.526px;"> a </div>
<div class="a t " style="left:110.00px;top:420.55px;font-size:14px;line-height:14px;color:#1c1c1c;letter-spacing:0.215px;text-decoration:line-through;text-decoration-thickness:1.3px;">faint, eerie light, far</div>
<div class="a" style="left:10.20px;top:439.20px;width:37.30px;height:16.10px;background:#f6c4c4;"></div>
<div class="a" style="left:47.50px;top:439.20px;width:240.00px;height:16.10px;background:#c8e6c2;"></div>
<div class="a t " style="left:10.20px;top:440.85px;font-size:14px;line-height:14px;color:#1c1c1c;letter-spacing:0.251px;text-decoration:line-through;text-decoration-thickness:1.3px;">larger</div>
<div class="a t " style="left:47.50px;top:440.85px;font-size:14px;line-height:14px;color:#1c1c1c;letter-spacing:0.576px;text-decoration:underline;text-decoration-thickness:1.3px;text-underline-offset:2px;">than any whale, and infinitely faster</div>
<div class="a t " style="left:287.50px;top:440.85px;font-size:14px;line-height:14px;color:#1c1c1c;letter-spacing:-0.438px;"> and</div>
<div class="a t " style="left:357.50px;top:339.35px;font-size:14px;line-height:14px;color:#1c1c1c;letter-spacing:0.164px;">Over time, multiple ships reported spotting "an</div>
<div class="a t " style="left:357.50px;top:359.65px;font-size:14px;line-height:14px;color:#1c1c1c;letter-spacing:-0.052px;">enormous thing" at sea—a long, spindle-shaped form,</div>
<div class="a t " style="left:357.50px;top:379.95px;font-size:14px;line-height:14px;color:#1c1c1c;letter-spacing:0.126px;">sometimes glowing with a faint, eerie light, far larger</div>
<div class="a t " style="left:357.50px;top:400.25px;font-size:14px;line-height:14px;color:#1c1c1c;letter-spacing:0.057px;">and swifter than any whale.</div>
<div class="a t " style="left:357.50px;top:434.55px;font-size:14px;line-height:14px;color:#1c1c1c;letter-spacing:0.068px;">The relevant data on this apparition, as recorded in</div>
</div>
<div class="a" style="left:1113.10px;top:117.20px;width:6.80px;height:19.50px;background:#d2d2d2;border-radius:3.4px;"></div>
<div class="a t " style="left:805.90px;top:596.24px;font-size:12px;line-height:12px;color:#222;letter-spacing:-0.119px;">Show comparison</div>
<div class="a" style="left:903.80px;top:596.00px;width:22.20px;height:12.00px;background:#a9d6f6;border-radius:6px;"></div>
<div class="a" style="left:917.4px;top:593.4px;width:17px;height:17px;border-radius:50%;background:#1e9be9;box-shadow:0 1px 2px rgba(0,0,0,0.15)"></div>
<svg class="a" style="left:917.4px;top:593.4px;" width="17" height="17" viewBox="0 0 17 17"><path d="M4.2 8.8L7.2 11.6L12.8 5.6" fill="none" stroke="#fff" stroke-width="1.7" stroke-linecap="round" stroke-linejoin="round"/></svg>
<svg class="a" style="left:955px;top:592px;" width="19" height="18" viewBox="0 0 19 18"><path d="M2.6 1H16.6Q17.8 1 17.8 2.2V12.2Q17.8 13.4 16.6 13.4H5.4L1.4 16.8V2.2Q1.4 1 2.6 1Z" fill="none" stroke="#7a7a7a" stroke-width="1.5" stroke-linejoin="round"/><path d="M5.4 9.6L10.2 4.8" stroke="#7a7a7a" stroke-width="2.6" stroke-linecap="butt"/><path d="M9.6 9.6H14.6" stroke="#7a7a7a" stroke-width="1.5"/></svg>
<svg class="a" style="left:998px;top:592.4px;" width="14" height="17" viewBox="0 0 14 17"><path d="M2.2 1.2H7.8L13.2 6.6V15Q13.2 16.2 12 16.2H2.2Q1 16.2 1 15V2.4Q1 1.2 2.2 1.2Z" fill="none" stroke="#7a7a7a" stroke-width="1.5" stroke-linejoin="round"/><path d="M4.6 7.6A3.4 3.4 0 1 1 4 10.6" fill="none" stroke="#7a7a7a" stroke-width="1.4"/><path d="M3.4 6.4V9.2H6.2" fill="none" stroke="#7a7a7a" stroke-width="1.3"/></svg>
<svg class="a" style="left:1039px;top:592.4px;" width="14" height="17" viewBox="0 0 14 17"><path d="M0.8 3H12.8" fill="none" stroke="#7a7a7a" stroke-width="1.9"/><path d="M4.4 1.5H9.2" fill="none" stroke="#7a7a7a" stroke-width="1.4"/><path d="M2.4 4.4V15Q2.4 16 3.4 16H10.4Q11.4 16 11.4 15V4.4" fill="none" stroke="#7a7a7a" stroke-width="1.7"/></svg>
<div class="a" style="left:1076.2px;top:585.6px;width:55.7px;height:30.5px;border-radius:5px;background:#139de9"></div>
<div class="a t " style="left:1090.60px;top:595.94px;font-size:12px;line-height:12px;color:#fff;letter-spacing:-0.322px;-webkit-text-stroke:0.1px #fff;">Done</div>
<svg class="a" style="left:-2px;top:666px;" width="8" height="8" viewBox="0 0 8 8"><path d="M6.4 6.4L1.6 1.6L0 1.6L0 8L6.4 8Z" fill="#000" stroke="#fff" stroke-width="1"/></svg>
<svg class="a" style="left:1274px;top:666px;" width="8" height="8" viewBox="0 0 8 8"><path d="M1.6 6.4L6.4 1.6L8 1.6L8 8L1.6 8Z" fill="#000" stroke="#fff" stroke-width="1"/></svg>
</body></html>
